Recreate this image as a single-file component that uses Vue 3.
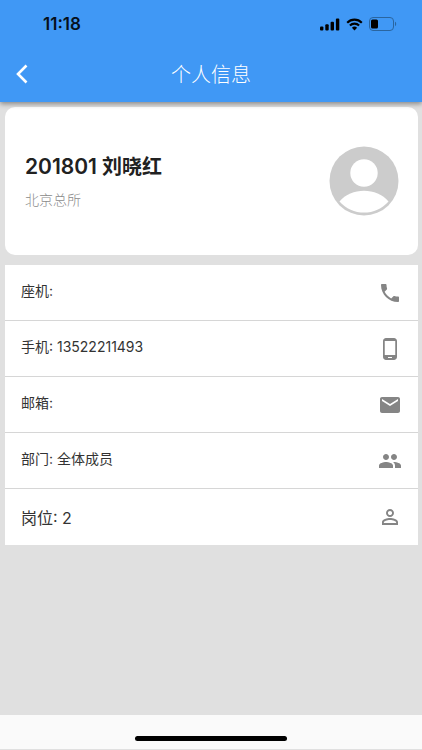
<script setup>
const profile = {
  code: '201801',
  name: '刘晓红',
  office: '北京总所'
}

const rows = [
  { label: '座机', value: '', icon: 'M6.62 10.79c1.44 2.83 3.76 5.14 6.59 6.59l2.2-2.2c.27-.27.67-.36 1.02-.24 1.12.37 2.33.57 3.57.57.55 0 1 .45 1 1V20c0 .55-.45 1-1 1-9.39 0-17-7.61-17-17 0-.55.45-1 1-1h3.5c.55 0 1 .45 1 1 0 1.25.2 2.45.57 3.57.11.35.03.74-.25 1.02l-2.2 2.2z' },
  { label: '手机', value: '13522211493', icon: 'M16 1H8C6.34 1 5 2.34 5 4v16c0 1.66 1.34 3 3 3h8c1.66 0 3-1.34 3-3V4c0-1.66-1.34-3-3-3zm-2 20h-4v-1h4v1zm3.25-3H6.75V4h10.5v14z' },
  { label: '邮箱', value: '', icon: 'M20 4H4c-1.1 0-1.99.9-1.99 2L2 18c0 1.1.9 2 2 2h16c1.1 0 2-.9 2-2V6c0-1.1-.9-2-2-2zm0 4l-8 5-8-5V6l8 5 8-5v2z' },
  { label: '部门', value: '全体成员', icon: 'M16 11c1.66 0 2.99-1.34 2.99-3S17.66 5 16 5c-1.66 0-3 1.34-3 3s1.34 3 3 3zm-8 0c1.66 0 2.99-1.34 2.99-3S9.66 5 8 5C6.34 5 5 6.34 5 8s1.34 3 3 3zm0 2c-2.33 0-7 1.17-7 3.5V19h14v-2.5c0-2.33-4.67-3.5-7-3.5zm8 0c-.29 0-.62.02-.97.05 1.16.84 1.97 1.97 1.97 3.45V19h6v-2.5c0-2.33-4.67-3.5-7-3.5z' },
  { label: '岗位', value: '2', large: true, icon: 'M12 5.9c1.16 0 2.1.94 2.1 2.1s-.94 2.1-2.1 2.1S9.9 9.16 9.9 8s.94-2.1 2.1-2.1m0 9c2.97 0 6.1 1.46 6.1 2.1v1.1H5.9V17c0-.64 3.13-2.1 6.1-2.1M12 4C9.79 4 8 5.79 8 8s1.79 4 4 4 4-1.79 4-4-1.79-4-4-4zm0 9c-2.67 0-8 1.34-8 4v3h16v-3c0-2.66-5.33-4-8-4z' }
]
</script>

<template>
  <div class="page">
    <header class="header">
      <div class="status-bar">
        <span class="time">11:18</span>
        <div class="status-icons">
          <svg class="signal" viewBox="0 0 20 13" aria-hidden="true">
            <rect x="0" y="8.5" width="3.4" height="4" rx="1" />
            <rect x="5.3" y="6.3" width="3.4" height="6.2" rx="1" />
            <rect x="10.6" y="3.7" width="3.4" height="8.8" rx="1" />
            <rect x="15.9" y="0.5" width="3.4" height="12" rx="1" />
          </svg>
          <svg class="wifi" viewBox="0 0 17 13" aria-hidden="true">
            <path d="M1.2 4.7a10.3 10.3 0 0 1 14.6 0M3.9 7.5a6.5 6.5 0 0 1 9.2 0" fill="none" stroke="#000" stroke-width="2.1" />
            <path d="M5.9 9.8a3.8 3.8 0 0 1 5.2 0L8.5 12.5z" />
          </svg>
          <svg class="battery" viewBox="0 0 28 14" aria-hidden="true">
            <rect x="0.5" y="0.5" width="24" height="13" rx="3.5" fill="none" stroke="#2a659f" />
            <path d="M26 4.8v4.4c1.6-.6 1.6-3.8 0-4.4z" fill="#2a659f" />
            <rect x="2" y="2.5" width="7" height="9" rx="1.5" />
          </svg>
        </div>
      </div>
      <nav class="toolbar">
        <button class="back" type="button" aria-label="返回">
          <svg viewBox="0 0 12 20" aria-hidden="true">
            <path d="M10.5 1.5L2 10l8.5 8.5" fill="none" stroke="#fff" stroke-width="2.6" />
          </svg>
        </button>
        <h1 class="title">个人信息</h1>
      </nav>
    </header>

    <main class="content">
      <section class="profile">
        <div>
          <h2 class="name"><span class="code">{{ profile.code }}</span> {{ profile.name }}</h2>
          <p class="office">{{ profile.office }}</p>
        </div>
        <svg class="avatar" viewBox="0 0 70 70" aria-hidden="true">
          <circle cx="35" cy="35" r="34.5" fill="#ccc" />
          <circle cx="35" cy="27" r="13.7" fill="#fff" />
          <path d="M10.5 55.5C22 41 48 41 59.500 55.500C47 70.300 23 70.300 10.500 55.500z" fill="#fff" />
        </svg>
      </section>

      <ul class="list">
        <li v-for="row in rows" :key="row.label" class="row" :class="{ large: row.large }">
          <span class="row-text">{{ row.label }}: {{ row.value }}</span>
          <svg class="row-icon" viewBox="0 0 24 24" aria-hidden="true">
            <path :d="row.icon" />
          </svg>
        </li>
      </ul>
    </main>

    <footer class="footer">
      <div class="home-bar"></div>
    </footer>
  </div>
</template>

<style>
body {
  background: #e0e0e0;
}
</style>

<style scoped>
.page {
  display: flex;
  flex-direction: column;
  min-height: 100vh;
  font-family: Inter, "Noto Sans CJK SC", sans-serif;
  color: #212121;
  background: #e0e0e0;
}

.header {
  position: relative;
  background: #4098f5;
  box-shadow: 0 2px 5px rgba(0, 0, 0, 0.4);
}

.status-bar {
  display: flex;
  align-items: center;
  justify-content: space-between;
  height: 46px;
  padding: 2px 25px 0 43px;
  box-sizing: border-box;
  color: #06101c;
}

.time {
  font-size: 17px;
  font-weight: 600;
}

.status-icons {
  display: flex;
  align-items: center;
  gap: 6px;
}

.signal { width: 20px; height: 13px; }
.wifi { width: 17px; height: 13px; }
.battery { width: 28px; height: 14px; }

.toolbar {
  display: grid;
  grid-template-columns: 44px 1fr 44px;
  align-items: center;
  height: 56px;
}

.back {
  display: flex;
  align-items: center;
  justify-content: center;
  height: 44px;
  padding: 0;
  border: 0;
  background: none;
}

.back svg {
  width: 12px;
  height: 20px;
}

.title {
  margin: 0;
  padding-top: 2px;
  text-align: center;
  font-size: 20px;
  font-weight: 300;
  line-height: 28px;
  color: #fff;
}

.content {
  flex: 1;
  padding: 5px 4px 0 5px;
}

.profile {
  display: flex;
  align-items: center;
  justify-content: space-between;
  padding: 39px 19px 39px 20px;
  border-radius: 10px;
  background: #fff;
}

.name {
  margin: 0;
  font-size: 20px;
  font-weight: 600;
  line-height: 30px;
}

.code {
  font-size: 21px;
}

.office {
  margin: 8px 0 0;
  font-size: 14px;
  font-weight: 300;
  line-height: 20px;
  color: #8a8a8a;
}

.avatar {
  width: 70px;
  height: 70px;
}

.list {
  margin: 10px 0 0;
  padding: 0;
  list-style: none;
  background: #fff;
}

.row {
  display: flex;
  align-items: center;
  justify-content: space-between;
  min-height: 55px;
  padding: 0 16px;
  border-bottom: 1px solid #d6d6d6;
  font-size: 14px;
  color: #333;
}

.row:last-child {
  border-bottom-color: #fff;
}

.row-text {
  padding-bottom: 5px;
}

.large {
  font-size: 16px;
}

.large .row-text {
  padding-bottom: 0;
}

.row-icon {
  width: 24px;
  height: 24px;
  fill: #858585;
}

.footer {
  display: flex;
  justify-content: center;
  align-items: center;
  height: 35px;
  padding-top: 12px;
  box-sizing: border-box;
  border-bottom: 1px solid #e0e0e0;
  background: #fafafa;
}

.home-bar {
  width: 36%;
  height: 5px;
  border-radius: 3px;
  background: #000;
}
</style>
